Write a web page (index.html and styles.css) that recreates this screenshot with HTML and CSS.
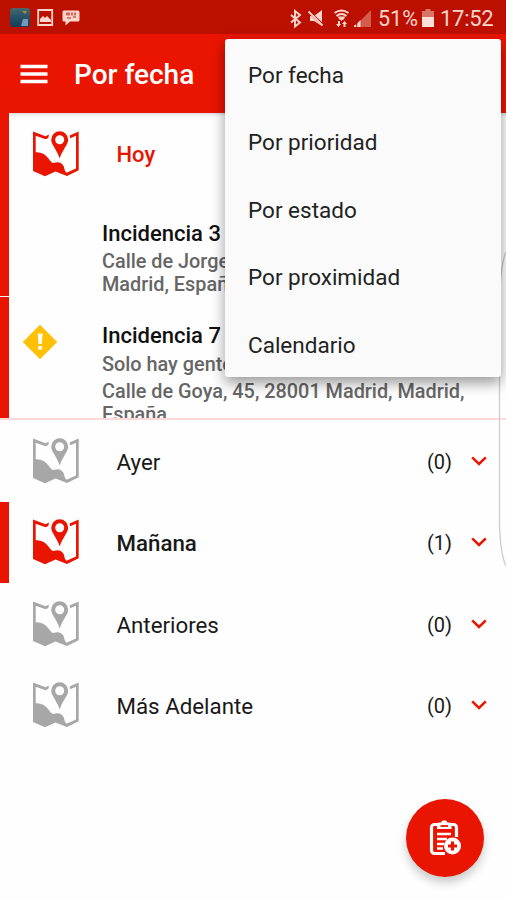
FILE: index.html
```html
<!DOCTYPE html>
<html lang="es">
<head>
<meta charset="utf-8">
<title>Por fecha</title>
<link rel="stylesheet" href="styles.css">
</head>
<body>
<svg class="defs" aria-hidden="true">
  <symbol id="map" viewBox="0 0 46 46">
    <path fill="currentColor" d="M0 .5 12.500 5.200 16 3.400 15.300 7 12.600 8.200 2.700 4.800V21.200C8 20.800 12 23 15.500 27.500 18 31 19 32.300 21.300 31.800 25.500 30.200 29 32 30.600 35 31.500 37 31 39.500 33.500 41.800L43 37.400V4.800L37.200 7.300 36.600 4.400 45.700.5V39.200L34 45 22.500 40.500 12 45.300 0 40Z"/>
    <path fill="currentColor" fill-rule="evenodd" d="M26.700.2A8.500 8.500 0 0 1 35.200 8.700C35.200 13.500 29.500 18.500 26.700 27.500 23.900 18.500 18.200 13.500 18.200 8.700A8.500 8.500 0 0 1 26.700.2ZM26.700 4.200A4.500 4.500 0 1 0 26.700 13.200 4.500 4.500 0 1 0 26.700 4.200Z"/>
  </symbol>
  <symbol id="chevron" viewBox="0 0 16 10"><path d="M1.200 1.400 8 8 14.800 1.400" fill="none" stroke="currentColor" stroke-width="2.500"/></symbol>
</svg>
<div class="screen">
  <div class="status">
    <svg class="notices" viewBox="0 0 72 22">
      <defs><linearGradient id="tile" x2="0" y2="1"><stop stop-color="#49676a"/><stop offset=".5" stop-color="#24536a"/><stop offset="1" stop-color="#173d55"/></linearGradient></defs>
      <rect x="0" y="1" width="20" height="19" rx="3" fill="url(#tile)"/>
      <path d="M12 4h5l-2 3z" fill="#a58b42"/><path d="M13 12h5v7h-7z" fill="#7795b8"/>
      <path d="M28.200 3h14v15h-14z" fill="none" stroke="#ffd5ce" stroke-width="1.800"/>
      <path d="M30 15v-3l3-3 2 2 2-2 4 4v2z" fill="#ffd5ce"/>
      <path d="M54 3.500h14a1.500 1.500 0 0 1 1.500 1.500v8a1.500 1.500 0 0 1-1.500 1.500h-8l-4.500 4v-4H54a1.500 1.500 0 0 1-1.500-1.500V5A1.500 1.500 0 0 1 54 3.500Z" fill="#ffd5ce"/>
      <path d="M57 5.500v3m2-3v3m3-3v3m3-3v3M57 11h4m2-1h3" stroke="#b51c0c" stroke-width="1.200"/>
    </svg>
    <div class="status-right">
      <svg class="signals" viewBox="0 0 86 22">
        <path d="m3 7 9 7.500-5 4V3l5 4-9 7.500" fill="none" stroke="#ffd5ce" stroke-width="1.900"/>
        <path d="M22 8h4l8-6v16l-8-5h-4z" fill="#ffd5ce"/><path d="m20 3 16 15" stroke="#bb1000" stroke-width="3"/><path d="m20.500 3.500 14 14" stroke="#ffd5ce" stroke-width="1.800"/>
        <g fill="none" stroke="#ffd5ce" stroke-width="1.900"><path d="M46.500 5q7-5 14 0M48.500 8q5-4 10 0M51 11q2.500-2 5 0"/></g>
        <path d="m53.500 13-4-4.500h8z" fill="#ffd5ce"/><path d="M48 16h2v-3h2v3h1l-2.500 3zm6 0 2.500-3 2.500 3h-1.500v3h-2v-3z" fill="#ffd5ce"/>
        <path d="M66 19 83 2v17z" fill="#d65b4f"/><path d="M66 19v-1.500l2-1V19zm3.500 0v-4l3-3v7z" fill="#ffd5ce"/>
      </svg>
      <span class="percent">51%</span>
      <svg class="battery" viewBox="0 0 12 18"><path d="M3.500 0h5v2H12v6H0V2h3.500z" fill="#d97469"/><path d="M0 8h12v10H0z" fill="#ffe0db"/></svg>
      <span class="clock">17:52</span>
    </div>
  </div>
  <header class="bar">
    <svg class="burger" viewBox="0 0 28 20"><path d="M.5 2.500h27M.5 10h27M.5 17.500h27" stroke="#fff" stroke-width="3.400"/></svg>
    <h1>Por fecha</h1>
  </header>
  <main>
    <section class="today">
      <div class="first">
        <div class="today-head"><svg class="map"><use href="#map"/></svg><span>Hoy</span></div>
        <article><h2>Incidencia 3</h2><p>Calle de Jorge</p><p>Madrid, España</p></article>
      </div>
      <div class="second">
        <svg class="warning" viewBox="0 0 36 36"><path d="M18 .8 35.200 18 18 35.200.8 18Z" fill="#ffc107"/><path d="M15.800 9.500h4.800l-.8 10.500h-3.200zM16.300 22h3.800v3.600h-3.800z" fill="#fff"/></svg>
        <article><h2>Incidencia 7</h2><p class="note">Solo hay gente</p><p>Calle de Goya, 45, 28001 Madrid, Madrid,</p><p>España</p></article>
      </div>
    </section>
    <div class="row"><svg class="map"><use href="#map"/></svg><span class="name">Ayer</span><span class="count">(0)</span><svg class="chevron"><use href="#chevron"/></svg></div>
    <div class="row active"><svg class="map"><use href="#map"/></svg><span class="name">Mañana</span><span class="count">(1)</span><svg class="chevron"><use href="#chevron"/></svg></div>
    <div class="row"><svg class="map"><use href="#map"/></svg><span class="name">Anteriores</span><span class="count">(0)</span><svg class="chevron"><use href="#chevron"/></svg></div>
    <div class="row"><svg class="map"><use href="#map"/></svg><span class="name">Más Adelante</span><span class="count">(0)</span><svg class="chevron"><use href="#chevron"/></svg></div>
  </main>
  <svg class="edge" viewBox="0 0 8 320"><path d="M8 2Q2.500 15 1.500 50V275Q2.500 305 8 316" fill="none" stroke="#ccc" stroke-width="1.300"/></svg>
  <nav class="menu"><a>Por fecha</a><a>Por prioridad</a><a>Por estado</a><a>Por proximidad</a><a>Calendario</a></nav>
  <button class="fab" aria-label="Nueva incidencia">
    <svg viewBox="0 0 32 36">
      <path d="M10 4.500H5.500A3 3 0 0 0 2.500 7.500v23A3 3 0 0 0 5.500 33.500H16M20 4.500h4.500A3 3 0 0 1 27.500 7.500V17" fill="none" stroke="#fff" stroke-width="3.200"/>
      <path d="M8 9V4.500a2 2 0 0 1 2-2h2a3.500 3.500 0 0 1 6.500 0h2a2 2 0 0 1 2 2V9z" fill="#fff"/><path d="M11.500 6h7.500" stroke="#e91500" stroke-width="1.800"/>
      <path d="M8 14h14M8 19h10M8 24h7M8 28.500h6" stroke="#fff" stroke-width="2.500"/>
      <circle cx="23.500" cy="26" r="8.500" fill="#fff"/><path d="M23.500 21.500v9M19 26h9" stroke="#e91500" stroke-width="3.200"/>
    </svg>
  </button>
</div>
</body>
</html>
```
FILE: styles.css
```css
* { box-sizing: border-box; }
body { margin: 0; background: #fefefe; font-family: Roboto, sans-serif; color: #111; }
h1, h2, p { margin: 0; }
svg { display: block; flex: none; }
.defs { position: absolute; width: 0; height: 0; }
.screen { position: relative; width: 506px; height: 900px; overflow: hidden; background: #fefefe; }
.status { height: 34px; background: #bb1000; color: #ffd5ce; display: flex; justify-content: space-between; padding: 0 12px 0 10px; }
.notices { width: 72px; height: 22px; margin-top: 7px; }
.status-right { display: flex; align-items: center; font-size: 22px; padding-top: 3px; }
.signals { width: 86px; height: 22px; margin-right: 4px; }
.percent { font-size: 21.500px; width: 39px; white-space: nowrap; }
.battery { width: 12px; height: 18px; margin: 0 6px 2px 5px; }
.clock { width: 54px; letter-spacing: -.3px; }
.bar { height: 79px; background: #e91500; color: #fff; display: flex; align-items: center; padding: 0 20px; }
.burger { width: 28px; height: 20px; margin-right: 26px; }
h1 { font-size: 28px; font-weight: 500; line-height: 32px; padding-top: 3px; }
main { background: linear-gradient(#ddd, #fefefe 4px); }
.today { height: 307px; overflow: hidden; border-bottom: 2px solid #ffd9da; }
.first { height: 183px; border-left: 9px solid #e91500; }
.second { height: 121px; border-left: 9px solid #e91500; display: flex; margin-top: 1px; padding: 25px 0 0 13px; }
.today-head { height: 82px; display: flex; align-items: center; padding-left: 23.500px; color: #e91500; font-size: 22px; font-weight: 500; }
.today-head span { padding-top: 1px; }
.map { width: 46px; height: 46px; margin-right: 38px; }
.first article { padding: 24px 0 0 93px; }
article { color: #666; font-size: 19.850px; font-weight: 500; line-height: 23px; white-space: nowrap; }
h2 { font-size: 22px; font-weight: 500; line-height: 29px; margin-bottom: 2px; color: #111; }
.second h2 { line-height: 27px; margin-bottom: 4px; }
.warning { width: 36px; height: 36px; margin: 2px 44px 0 0; }
.note { margin-bottom: 4px; }
.row { height: 81.500px; display: flex; align-items: center; padding: 0 19px 0 23.500px; border-left: 9px solid transparent; color: #a7a7a7; }
.name, .count { color: #191919; font-size: 22.300px; line-height: 28px; padding-top: 2px; }
.name { flex: 1; }
.active { border-left-color: #e91500; color: #e91500; }
.active .name { font-weight: 500; }
.count { width: 24px; font-size: 20px; margin-right: 20px; white-space: nowrap; }
.chevron { width: 16px; height: 10px; color: #e91500; }
.edge { position: absolute; left: 498px; top: 250px; width: 8px; height: 320px; }
.menu { position: absolute; left: 225px; top: 39px; width: 276px; height: 338px; background: #fafafa; border-radius: 3px; box-shadow: 0 6px 14px #0006; padding-left: 23px; color: #222; }
.menu a { display: flex; align-items: center; height: 67.500px; font-size: 22.500px; padding-top: 4px; }
.fab { position: absolute; left: 406px; top: 799px; width: 78px; height: 78px; padding: 0; border: 0; border-radius: 50%; background: #e91500; box-shadow: 0 6px 10px #0003; display: flex; align-items: center; justify-content: center; }
.fab svg { width: 32px; height: 36px; }
```
